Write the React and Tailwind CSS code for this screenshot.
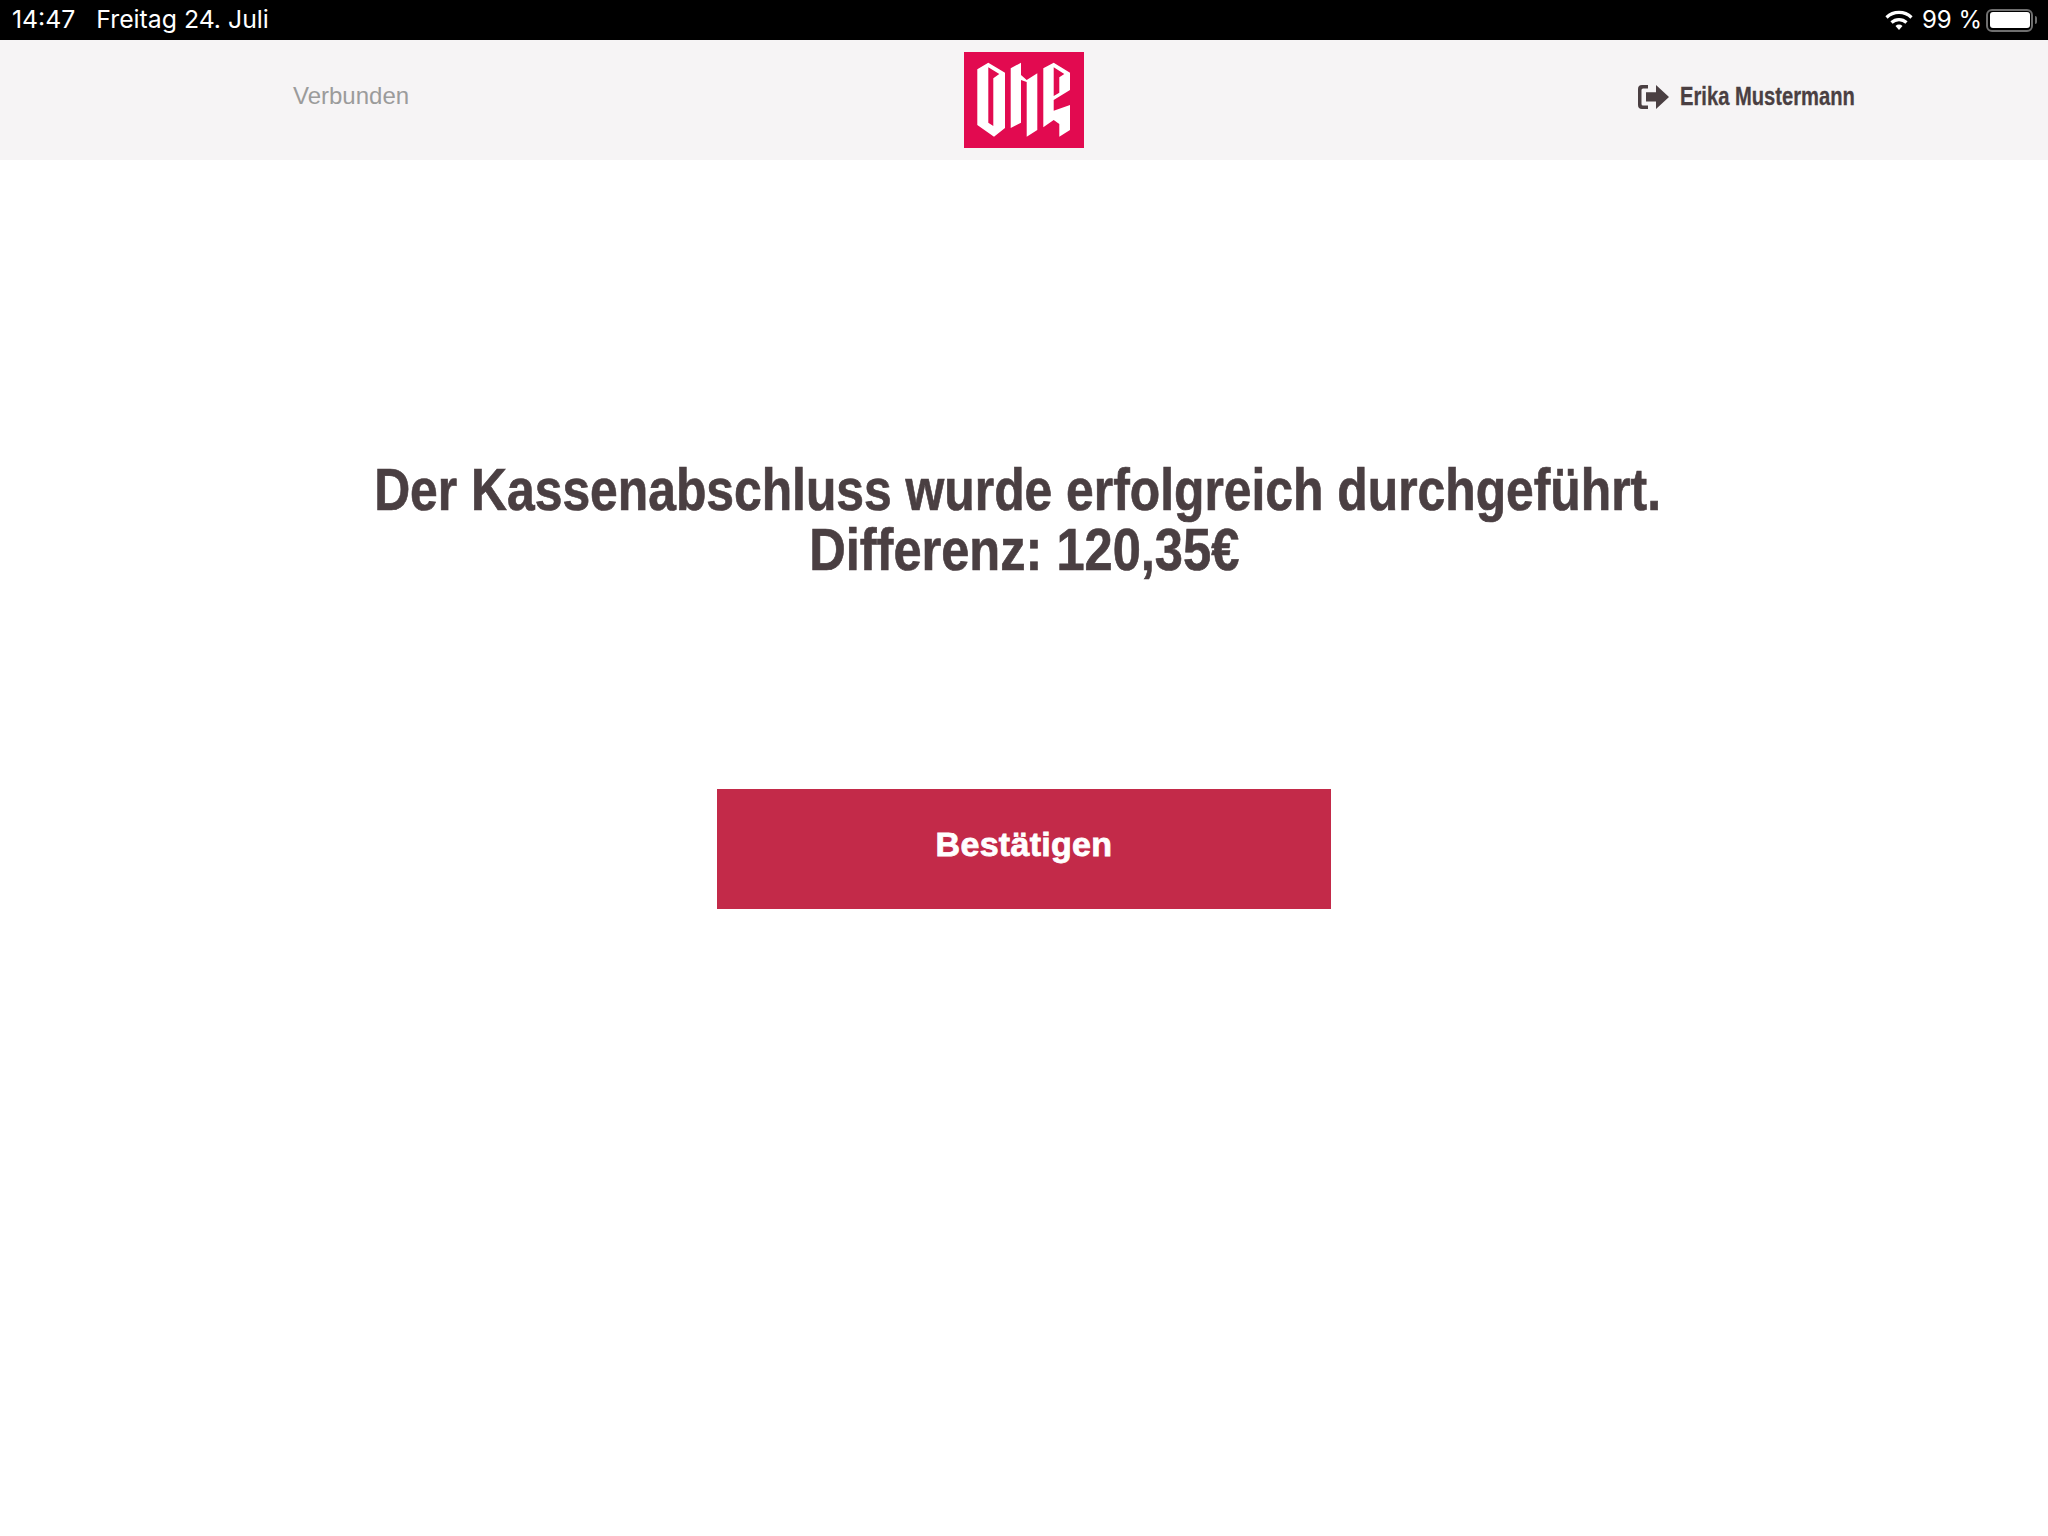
function Logo() {
  return (
    <svg viewBox="0 0 120 96" className="w-[120px] h-[96px] block">
      <rect width="120" height="96" fill="#e20a50" />
      <g fill="#ffffff" fillRule="evenodd">
        <path d="M13.300 17.300 L24.300 10.700 L41 20.700 L41 76 L30 84.700 L13.300 73 Z M24.300 15.300 L35.300 22 L29.300 26.300 L29.300 74 L24.300 70.700 Z" />
        <path d="M46.700 16.300 L57 10.700 L57 23 L62.700 28 L73.300 21.300 L73.300 78 L62.700 84.700 L62.700 30 L57 28 L57 70.700 L46.700 76 Z" />
        <path d="M79.300 16.300 L89.700 10.700 L106 20.700 L106 38 L89.700 48 L89.700 58.700 L106 53 L106 78 L95.300 84.700 L95.300 72 L89.700 68 L79.300 75.300 Z M89.700 15.300 L100.300 22 L95.300 25.300 L95.300 40.700 L89.700 44 Z" />
      </g>
    </svg>
  );
}

function ExitIcon() {
  return (
    <svg viewBox="0 0 31 24" className="w-[31px] h-6 block" fill="#4a3f42">
      <path d="M10 0 H4 Q0 0 0 4 V20 Q0 24 4 24 H10 V20.500 H5 Q3.500 20.500 3.500 19 V5 Q3.500 3.500 5 3.500 H10 Z" />
      <path d="M8 7.300 H18 V0 L31 12 L18 24 V16.500 H8 Z" />
    </svg>
  );
}

export default function App() {
  return (
    <div className="min-h-screen bg-white font-['Liberation_Sans',sans-serif]">
      {/* status bar */}
      <div className="h-10 bg-black text-white flex items-center justify-between pl-3 pr-[11px] text-[24.800px] font-['Inter',sans-serif]">
        <div className="flex gap-[21px]">
          <span>14:47</span>
          <span>Freitag 24. Juli</span>
        </div>
        <div className="flex items-center">
          <svg viewBox="0 0 28 20" className="w-7 h-5 mr-[9px]" fill="none" stroke="#ffffff" strokeWidth="3.200">
            <path d="M1.500 7.500 A18 18 0 0 1 26.500 7.500" />
            <path d="M6.500 12.500 A11 11 0 0 1 21.500 12.500" />
            <path d="M10.500 16 L14 20 L17.500 16 A5 5 0 0 0 10.500 16 Z" fill="#ffffff" stroke="none" />
          </svg>
          <span className="text-[24px] mr-[4px]">99 %</span>
          <div className="flex items-center gap-0.5">
            <div className="w-[47px] h-[23px] rounded-[6px] border-2 border-[#6f6f6f] p-[1.500px]">
              <div className="w-full h-full bg-white rounded-[3px]" />
            </div>
            <div className="w-[2px] h-2 bg-[#6f6f6f] rounded-r-sm" />
          </div>
        </div>
      </div>

      {/* header */}
      <div className="h-[120px] bg-[#f6f4f5] grid grid-cols-3 items-center">
        <div className="pl-[293px] pb-2 text-[24px] text-[#9b9b9b]">Verbunden</div>
        <div className="flex justify-center">
          <Logo />
        </div>
        <div className="flex items-center pl-[273px] pb-1.5">
          <ExitIcon />
          <span className="block ml-[11px] origin-left scale-x-[0.807] font-bold text-[25px] text-[#4a3f42] [-webkit-text-stroke:0.3px_#4a3f42] whitespace-nowrap">
            Erika Mustermann
          </span>
        </div>
      </div>

      {/* message */}
      <div className="flex flex-col items-center pt-[300px]">
        <h1 className="font-bold text-[60px] leading-[60px] text-[#4a3f42] [-webkit-text-stroke:0.7px_#4a3f42] text-center">
          <span className="block pr-4 scale-x-[0.83] whitespace-nowrap">Der Kassenabschluss wurde erfolgreich durchgeführt.</span>
          <span className="block scale-x-[0.843] whitespace-nowrap">Differenz: 120,35€</span>
        </h1>
        <button className="mt-[209px] w-[614px] h-[120px] bg-[#c32a49] text-white font-bold text-[34px] tracking-[0.3px] [-webkit-text-stroke:0.8px_white] pb-2.5">
          Bestätigen
        </button>
      </div>
    </div>
  );
}
